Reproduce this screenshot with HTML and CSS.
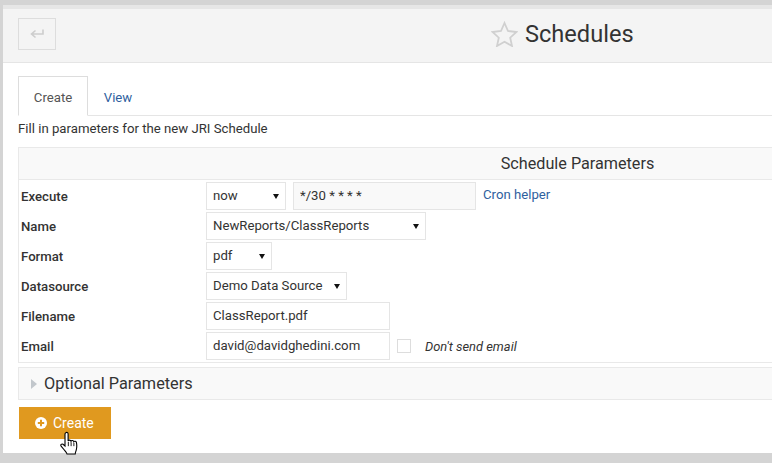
FILE: index.html
```html
<!DOCTYPE html>
<html lang="en">
<head>
    <meta charset="UTF-8">
    <title>Schedules</title>
    <link rel="stylesheet" href="styles.css">
</head>
<body>
<div class="page">
    <div class="topbar">
        <button class="back-btn" type="button">
            <svg width="14" height="10" viewBox="0 0 14 10"><path d="M13 0.5V5H2.5M5.5 1.500L1.500 5l4 3.500" fill="none" stroke="#cdcdcd" stroke-width="1.600"/></svg>
        </button>
        <h1 class="title">
            <svg width="27" height="26" viewBox="0 0 27 26"><path d="M13.500 2l3.500 8 8.500 1-6.300 5.700 1.800 8.300-7.500-4.300-7.500 4.300 1.800-8.300L1.500 11l8.500-1z" fill="none" stroke="#d0d0d0" stroke-width="1.800"/></svg>
            Schedules
        </h1>
    </div>

    <div class="content">
        <ul class="tabs">
            <li class="tab active">Create</li>
            <li class="tab"><a href="#">View</a></li>
        </ul>
        <p class="intro">Fill in parameters for the new JRI Schedule</p>

        <form class="params">
            <h3 class="params-title">Schedule Parameters</h3>
            <div class="row">
                <label>Execute</label>
                <span class="select w-80"><select><option>now</option></select></span>
                <input class="cron" type="text" value="*/30 * * * *" readonly>
                <a class="helper" href="#">Cron helper</a>
            </div>
            <div class="row">
                <label>Name</label>
                <span class="select w-220"><select><option>NewReports/ClassReports</option></select></span>
            </div>
            <div class="row">
                <label>Format</label>
                <span class="select w-66"><select><option>pdf</option></select></span>
            </div>
            <div class="row">
                <label>Datasource</label>
                <span class="select w-141"><select><option>Demo Data Source</option></select></span>
            </div>
            <div class="row">
                <label>Filename</label>
                <input class="text" type="text" value="ClassReport.pdf">
            </div>
            <div class="row">
                <label>Email</label>
                <input class="text" type="text" value="david@davidghedini.com">
                <span class="check"></span>
                <em class="check-label">Don't send email</em>
            </div>
        </form>

        <div class="optional">
            <span class="caret"></span>
            Optional Parameters
        </div>

        <div class="actions">
            <button class="create-btn" type="button">
                <svg width="12" height="12" viewBox="0 0 12 12"><circle cx="6" cy="6" r="6" fill="#fff"/><path d="M6 2.800v6.400M2.800 6h6.400" stroke="#e0991f" stroke-width="2"/></svg>
                Create
            </button>
            <svg class="cursor" width="20" height="27" viewBox="0 0 18 24"><path d="M5 1.500c1-.8 2.300-.2 2.300 1v6.300c.3-1 2.300-1 2.600.2.400-.9 2.200-.8 2.500.5.500-.7 2.200-.5 2.400.8.400 2 .4 4.500-.2 6.700-.3 1.200-.8 2-.9 3.500H6.300c-.5-1.500-1.500-2.500-2.800-4L1 13.500c-.8-1.200.5-2.500 1.700-1.700L4.500 13.300V2.800c0-.5.100-1 .5-1.300z" fill="#fff" stroke="#000" stroke-width="1"/><path d="M7.500 9.500v4M10 10v3.500M12.500 10.500v3" stroke="#000" stroke-width=".8"/></svg>
        </div>
    </div>
</div>
</body>
</html>
```

FILE: styles.css
```css
html, body {
    margin: 0;
    height: 100%;
    overflow: hidden;
}

body {
    font-family: Roboto, Arial, sans-serif;
    font-size: 13.2px;
    color: #333;
    background-color: #d4d4d4;
}

.page {
    width: 1133px;
    height: 448px;
    margin: 5px 0 0 3px;
    background-color: #fff;
    border-top: 4px solid #e6e6e6;
    box-sizing: border-box;
}

.topbar {
    position: relative;
    display: flex;
    align-items: center;
    justify-content: center;
    height: 54px;
    padding-right: 14px;
    box-sizing: border-box;
    background-color: #f4f4f4;
    border-bottom: 1px solid #e5e5e5;
}

.back-btn {
    position: absolute;
    left: 15px;
    top: 9px;
    display: flex;
    align-items: center;
    justify-content: center;
    width: 38px;
    height: 32px;
    padding: 0;
    background: transparent;
    border: 1px solid #ddd;
}

.title {
    display: flex;
    align-items: center;
    gap: 7px;
    margin: 0 0 4px;
    width: 143px;
    white-space: nowrap;
    font-size: 23.6px;
    font-weight: 400;
    color: #333;
}

.content {
    padding: 13px 0 0 15px;
}

.tabs {
    display: flex;
    list-style: none;
    margin: 0;
    padding: 0;
    height: 39px;
    border-bottom: 1px solid #e5e5e5;
}

.tab {
    width: 60px;
    height: 40px;
    line-height: 43px;
    text-align: center;
    box-sizing: border-box;
    color: #555;
}

.tab a {
    color: #2f5f9e;
    text-decoration: none;
}

.tab.active {
    width: 70px;
    line-height: 42px;
    background-color: #fff;
    border: 1px solid #ddd;
    border-bottom-color: #fff;
}

.intro {
    margin: 0;
    height: 31px;
    line-height: 25px;
}

.params {
    border: 1px solid #e9e9e9;
    border-right: none;
    height: 216px;
    box-sizing: border-box;
}

.params-title {
    margin: 0 0 1px;
    height: 31px;
    line-height: 31px;
    text-align: center;
    font-size: 16.2px;
    font-weight: 400;
    background-color: #f9f9f9;
    border-bottom: 1px solid #e9e9e9;
}

.row {
    display: flex;
    align-items: center;
    height: 30px;
}

.row label {
    width: 185px;
    padding-left: 2px;
    font-weight: 500;
}

.select {
    position: relative;
    display: block;
    height: 28px;
}

.select::after {
    content: "";
    position: absolute;
    right: 7px;
    top: 12px;
    border-left: 3px solid transparent;
    border-right: 3px solid transparent;
    border-top: 5px solid #111;
}

.select select {
    width: 100%;
    height: 100%;
    padding: 0 0 2px 6px;
    border: 1px solid #e5e5e5;
    border-radius: 0;
    background: #fff;
    font: inherit;
    color: #333;
    appearance: none;
}

.w-80 { width: 80px; }
.w-220 { width: 220px; }
.w-66 { width: 66px; }
.w-141 { width: 141px; }

.text,
.cron {
    height: 28px;
    padding: 0 0 2px 6px;
    border: 1px solid #e5e5e5;
    box-sizing: border-box;
    font: inherit;
    color: #333;
}

.text {
    width: 184px;
}

.cron {
    width: 183px;
    margin-left: 7px;
    background-color: #f9f9f9;
}

.helper {
    margin: 0 0 4px 7px;
    color: #2f5f9e;
    text-decoration: none;
}

.check {
    width: 14px;
    height: 14px;
    margin-left: 7px;
    border: 1px solid #ddd;
    box-sizing: border-box;
}

.check-label {
    margin-left: 14px;
    font-size: 12.9px;
}

.optional {
    display: flex;
    align-items: center;
    height: 33px;
    margin-top: 4px;
    padding-left: 12px;
    border: 1px solid #e9e9e9;
    border-right: none;
    box-sizing: border-box;
    background-color: #f9f9f9;
    font-size: 16.3px;
}

.caret {
    width: 0;
    height: 0;
    margin-right: 7px;
    border-top: 5px solid transparent;
    border-bottom: 5px solid transparent;
    border-left: 6px solid #c2c7cc;
}

.actions {
    position: relative;
    margin: 7px 0 0 1px;
}

.create-btn {
    display: flex;
    align-items: center;
    gap: 6px;
    width: 92px;
    height: 32px;
    padding: 0 0 0 16px;
    background-color: #e0991f;
    border: none;
    color: #fff;
    font: inherit;
    font-size: 14px;
}

.cursor {
    position: absolute;
    left: 41px;
    top: 24px;
}
```
